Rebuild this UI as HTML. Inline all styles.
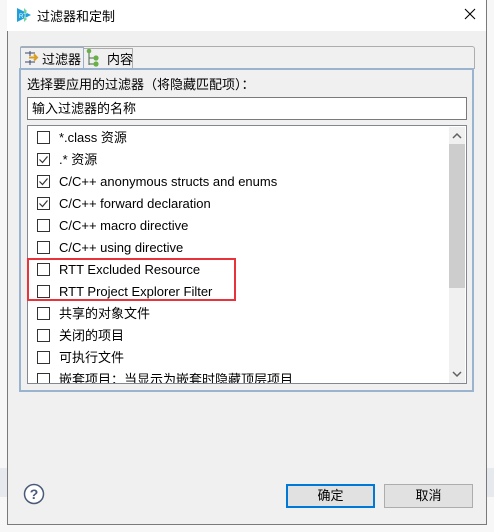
<!DOCTYPE html>
<html><head><meta charset="utf-8"><style>
*{margin:0;padding:0;box-sizing:border-box}
body{width:494px;height:532px;background:#f7f7f7;position:relative;overflow:hidden;font-family:"Liberation Sans","Noto Sans CJK SC",sans-serif;font-size:13px;color:#000}
.a{position:absolute}
.row{position:absolute;left:37px;height:22px;white-space:nowrap;line-height:22px}
.cb{position:absolute;left:0;top:5px;width:13px;height:13px;border:1px solid #333;background:#fff}
.row span{position:absolute;left:22px;top:0}
.btn{position:absolute;top:484px;width:89px;height:24px;background:#e1e1e1;border:1px solid #adadad;text-align:center;line-height:22px}
</style></head><body>
<div class="a" style="left:0;top:468px;width:494px;height:29px;background:#e6e9ee"></div>
<div class="a" style="left:7px;top:0;width:480px;height:525px;background:#f0f0f0;border:1px solid #7a7a7a;border-top:none"></div>
<div class="a" style="left:7px;top:0;width:480px;height:31px;background:#fff;border-right:1px solid #7a7a7a"></div>
<svg class="a" style="left:15px;top:6px" width="18" height="18" viewBox="0 0 18 18"><polygon points="2,2 16,9 2,16" fill="#1fa0d8"/><polygon points="9,2 12,5 9,8" fill="#6fd6a0"/><polygon points="9,10 12,13 9,16" fill="#6fd6a0"/><text x="4" y="12" font-size="6" fill="#fff" font-family="Liberation Sans">RT</text></svg>
<div class="a" style="left:37px;top:6px;font-size:13px">过滤器和定制</div>
<svg class="a" style="left:464px;top:8px" width="12" height="12"><path d="M1 1L11 11M11 1L1 11" stroke="#000" stroke-width="1.1"/></svg>
<div class="a" style="left:20px;top:46px;width:455px;height:23px;border:1px solid #adadad;border-bottom:none;border-radius:2px 3px 0 0"></div>
<div class="a" style="left:20px;top:47px;width:64px;height:22px;background:#f0f0f0;border:1px solid #9ab0c8;border-bottom:none"></div>
<div class="a" style="left:84px;top:48px;width:49px;height:21px;border:1px solid #adadad;border-bottom:none;border-left:none"></div>
<svg class="a" style="left:23px;top:49px" width="18" height="18"><path d="M2 4h10M2 13h10M7 2v5M7 11v5" stroke="#3a4a6a"/><path d="M6 8.5h8M11 5.5l3 3-3 3" stroke="#d9a020" stroke-width="2" fill="none"/></svg>
<div class="a" style="left:42px;top:49px">过滤器</div>
<svg class="a" style="left:86px;top:48px" width="14" height="20"><path d="M3 2v15M3 10h6M3 16h6" stroke="#4a6a4a"/><circle cx="3" cy="3" r="2.3" fill="#6ab04a"/><circle cx="10" cy="10" r="2.6" fill="#6ab04a"/><circle cx="10" cy="16" r="2.6" fill="#6ab04a"/></svg>
<div class="a" style="left:107px;top:49px">内容</div>
<div class="a" style="left:19px;top:68px;width:455px;height:324px;border:2px solid #9ab3cf"></div>
<div class="a" style="left:27px;top:74px">选择要应用的过滤器（将隐藏匹配项）：</div>
<div class="a" style="left:27px;top:97px;width:440px;height:23px;background:#fff;border:1px solid #7a7a7a;padding-left:4px;line-height:21px">输入过滤器的名称</div>
<div class="a" style="left:27px;top:125px;width:440px;height:259px;background:#fff;border:1px solid #828790;overflow:hidden">
<div class="a" style="left:421px;top:1px;width:16px;height:256px;background:#f0f0f0"></div>
<div class="a" style="left:421px;top:18px;width:16px;height:144px;background:#cdcdcd"></div>
<svg class="a" style="left:424px;top:6px" width="10" height="8"><path d="M1 6l4-4 4 4" stroke="#606060" stroke-width="1.5" fill="none"/></svg>
<svg class="a" style="left:424px;top:244px" width="10" height="8"><path d="M1 2l4 4 4-4" stroke="#606060" stroke-width="1.5" fill="none"/></svg>
</div>
<div class="a" style="left:28px;top:126px;width:420px;height:257px;overflow:hidden">
<div class="row" style="left:9px;top:0px"><div class="cb"></div><span style="top:1px">*.class 资源</span></div>
<div class="row" style="left:9px;top:22px"><div class="cb"><svg width="11" height="11" style="position:absolute;left:0;top:0"><path d="M1.5 5.5l3 3 5-6" stroke="#333" stroke-width="1.2" fill="none"/></svg></div><span style="top:1px">.* 资源</span></div>
<div class="row" style="left:9px;top:44px"><div class="cb"><svg width="11" height="11" style="position:absolute;left:0;top:0"><path d="M1.5 5.5l3 3 5-6" stroke="#333" stroke-width="1.2" fill="none"/></svg></div><span style="top:1px">C/C++ anonymous structs and enums</span></div>
<div class="row" style="left:9px;top:66px"><div class="cb"><svg width="11" height="11" style="position:absolute;left:0;top:0"><path d="M1.5 5.5l3 3 5-6" stroke="#333" stroke-width="1.2" fill="none"/></svg></div><span style="top:1px">C/C++ forward declaration</span></div>
<div class="row" style="left:9px;top:88px"><div class="cb"></div><span style="top:1px">C/C++ macro directive</span></div>
<div class="row" style="left:9px;top:110px"><div class="cb"></div><span style="top:1px">C/C++ using directive</span></div>
<div class="row" style="left:9px;top:132px"><div class="cb"></div><span style="top:1px">RTT Excluded Resource</span></div>
<div class="row" style="left:9px;top:154px"><div class="cb"></div><span style="top:1px">RTT Project Explorer Filter</span></div>
<div class="row" style="left:9px;top:176px"><div class="cb"></div><span style="top:1px">共享的对象文件</span></div>
<div class="row" style="left:9px;top:198px"><div class="cb"></div><span style="top:1px">关闭的项目</span></div>
<div class="row" style="left:9px;top:220px"><div class="cb"></div><span style="top:1px">可执行文件</span></div>
<div class="row" style="left:9px;top:242px"><div class="cb"></div><span style="top:1px">嵌套项目：当显示为嵌套时隐藏顶层项目</span></div>
</div>
<div class="a" style="left:27px;top:258px;width:209px;height:43px;border:2px solid #e8333a"></div>
<svg class="a" style="left:23px;top:483px" width="22" height="22"><circle cx="11" cy="11" r="9.5" fill="#fff" stroke="#4a5a78" stroke-width="1.5"/><text x="11" y="16" text-anchor="middle" font-size="14" font-weight="bold" fill="#4a5a78" font-family="Liberation Sans">?</text></svg>
<div class="btn" style="left:286px;border:2px solid #0078d7;line-height:20px">确定</div>
<div class="btn" style="left:384px">取消</div>
</body></html>
